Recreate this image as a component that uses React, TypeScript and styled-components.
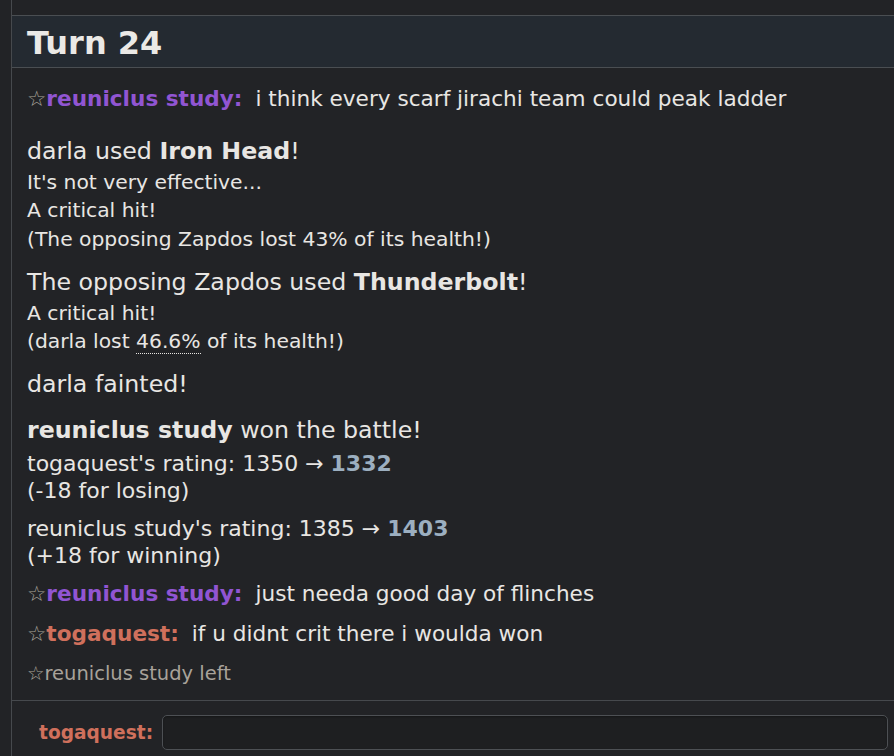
import React from "react";
import styled, { createGlobalStyle } from "styled-components";

const Global = createGlobalStyle`
  html, body { margin: 0; padding: 0; background: #222326; }
  body { font-family: Verdana, "DejaVu Sans", sans-serif; color: #e8e6e3; }
`;

const Page = styled.div`
  height: 756px;
  display: flex;
  flex-direction: column;
  background: #222326;
  overflow: hidden;
`;

const Panel = styled.div`
  margin-left: 11px;
  border-left: 1px solid #46494d;
  flex: 1;
  display: flex;
  flex-direction: column;
  padding-top: 15px;
`;

const TurnHeader = styled.h2`
  margin: 0;
  height: 51px;
  box-sizing: border-box;
  padding: 2px 0 0 15px;
  display: flex;
  align-items: center;
  background: #242a31;
  border-top: 1px solid #4a4e52;
  border-bottom: 1px solid #4a4e52;
  height: 53px;
  font-size: 32px;
  font-weight: bold;
  color: #ebe9e6;
`;

const Log = styled.div`
  flex: 1;
  padding: 16px 15px 0 15px;
  display: flex;
  flex-direction: column;
`;

const ChatLine = styled.div<{ $mt?: number }>`
  font-size: 21.6px;
  line-height: 30px;
  margin-top: ${(p) => p.$mt ?? 0}px;
  white-space: nowrap;
`;

const Star = styled.span`
  color: #a8a39b;
  font-weight: normal;
`;

const Name = styled.strong<{ $color: string }>`
  color: ${(p) => p.$color};
  font-weight: bold;
`;

const Msg = styled.span`
  margin-left: 13px;
`;

const Block = styled.div<{ $mt: number }>`
  margin-top: ${(p) => p.$mt}px;
  display: flex;
  flex-direction: column;
`;

const Big = styled.div`
  font-size: 23.7px;
  line-height: 31.5px;
  white-space: nowrap;
`;

const Small = styled.div`
  font-size: 20.3px;
  line-height: 28.5px;
  white-space: nowrap;
`;

const RatingLine = styled.div`
  font-size: 22px;
  line-height: 27px;
  white-space: nowrap;
`;

const Dotted = styled.abbr`
  text-decoration: none;
  border-bottom: 1px dotted #e8e6e3;
`;

const Rating = styled.strong`
  color: #9cafc0;
`;

const Leave = styled.div`
  margin-top: 10px;
  font-size: 19.5px;
  line-height: 30px;
  color: #a8a29a;
`;

const Footer = styled.div`
  height: 56px;
  box-sizing: border-box;
  border-top: 1px solid #46494d;
  display: flex;
  align-items: flex-start;
  padding: 14px 6px 0 27px;
  gap: 9px;
  margin-top: 11px;
`;

const FooterName = styled.strong`
  color: #d0705c;
  font-size: 18.6px;
  line-height: 35px;
  font-weight: bold;
  white-space: nowrap;
`;

const Input = styled.div`
  flex: 1;
  height: 35px;
  box-sizing: border-box;
  background: #1e1f21;
  border: 1px solid #4d5054;
  border-radius: 5px;
  box-shadow: inset 0 1px 2px rgba(0, 0, 0, 0.3);
`;

export default function App() {
  return (
    <Page>
      <Global />
      <Panel>
        <TurnHeader>Turn 24</TurnHeader>
        <Log>
          <ChatLine>
            <Star>☆</Star>
            <Name $color="#9155d2">reuniclus study:</Name>
            <Msg>i think every scarf jirachi team could peak ladder</Msg>
          </ChatLine>
          <Block $mt={22}>
            <Big>
              darla used <strong>Iron Head</strong>!
            </Big>
            <Small>It's not very effective...</Small>
            <Small>A critical hit!</Small>
            <Small>(The opposing Zapdos lost 43% of its health!)</Small>
          </Block>
          <Block $mt={14}>
            <Big>
              The opposing Zapdos used <strong>Thunderbolt</strong>!
            </Big>
            <Small>A critical hit!</Small>
            <Small>
              (darla lost <Dotted title="46.6%">46.6%</Dotted> of its health!)
            </Small>
          </Block>
          <Block $mt={13}>
            <Big>darla fainted!</Big>
          </Block>
          <Block $mt={15}>
            <Big>
              <strong>reuniclus study</strong> won the battle!
            </Big>
          </Block>
          <Block $mt={3}>
            <RatingLine>
              togaquest's rating: 1350 → <Rating>1332</Rating>
            </RatingLine>
            <RatingLine>(-18 for losing)</RatingLine>
          </Block>
          <Block $mt={11}>
            <RatingLine>
              reuniclus study's rating: 1385 → <Rating>1403</Rating>
            </RatingLine>
            <RatingLine>(+18 for winning)</RatingLine>
          </Block>
          <ChatLine $mt={10}>
            <Star>☆</Star>
            <Name $color="#9155d2">reuniclus study:</Name>
            <Msg>just needa good day of flinches</Msg>
          </ChatLine>
          <ChatLine $mt={10}>
            <Star>☆</Star>
            <Name $color="#d0705c">togaquest:</Name>
            <Msg>if u didnt crit there i woulda won</Msg>
          </ChatLine>
          <Leave>
            <Star>☆</Star>reuniclus study left
          </Leave>
        </Log>
        <Footer>
          <FooterName>togaquest:</FooterName>
          <Input />
        </Footer>
      </Panel>
    </Page>
  );
}
